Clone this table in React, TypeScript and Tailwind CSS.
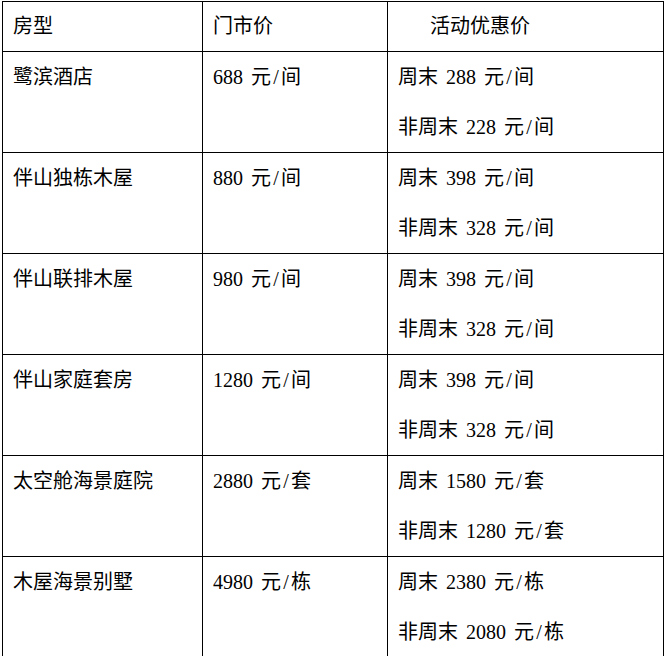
const rows = [
  { name: "鹭滨酒店", price: "688 元/间", weekend: "周末 288 元/间", weekday: "非周末 228 元/间" },
  { name: "伴山独栋木屋", price: "880 元/间", weekend: "周末 398 元/间", weekday: "非周末 328 元/间" },
  { name: "伴山联排木屋", price: "980 元/间", weekend: "周末 398 元/间", weekday: "非周末 328 元/间" },
  { name: "伴山家庭套房", price: "1280 元/间", weekend: "周末 398 元/间", weekday: "非周末 328 元/间" },
  { name: "太空舱海景庭院", price: "2880 元/套", weekend: "周末 1580 元/套", weekday: "非周末 1280 元/套" },
  { name: "木屋海景别墅", price: "4980 元/栋", weekend: "周末 2380 元/栋", weekday: "非周末 2080 元/栋" },
];

// half-width slash like the SimSun original
function Price({ text }: { text: string }) {
  const [a, b] = text.split("/");
  return (
    <span>
      {a}
      <span className="inline-block w-[10px] text-center">/</span>
      {b}
    </span>
  );
}

export default function App() {
  return (
    <div
      className="bg-white w-[664px] h-[656px] pl-[2px] pt-[1px] text-black text-[20px] [word-spacing:3px]"
      style={{ fontFamily: '"Liberation Serif", "Noto Sans CJK SC", serif' }}
    >
      <table className="table-fixed border-collapse w-[661px]">
        <colgroup>
          <col className="w-[200px]" />
          <col className="w-[185px]" />
          <col className="w-[276px]" />
        </colgroup>
        <thead>
          <tr className="h-[50px]">
            <th className="border border-black font-normal text-left align-middle p-0 pl-[10px] leading-[49px]">房型</th>
            <th className="border border-black font-normal text-left align-middle p-0 pl-[10px] leading-[49px]">门市价</th>
            <th className="border border-black font-normal text-left align-middle p-0 pl-[42px] leading-[49px]">活动优惠价</th>
          </tr>
        </thead>
        <tbody>
          {rows.map((r) => (
            <tr key={r.name} className="h-[101px]">
              <td className="border border-black align-top p-0 pl-[10px] leading-[50px]">{r.name}</td>
              <td className="border border-black align-top p-0 pl-[10px] leading-[50px]">
                <Price text={r.price} />
              </td>
              <td className="border border-black align-top p-0 pl-[10px] leading-[50px]">
                <div>
                  <Price text={r.weekend} />
                </div>
                <div>
                  <Price text={r.weekday} />
                </div>
              </td>
            </tr>
          ))}
        </tbody>
      </table>
    </div>
  );
}
